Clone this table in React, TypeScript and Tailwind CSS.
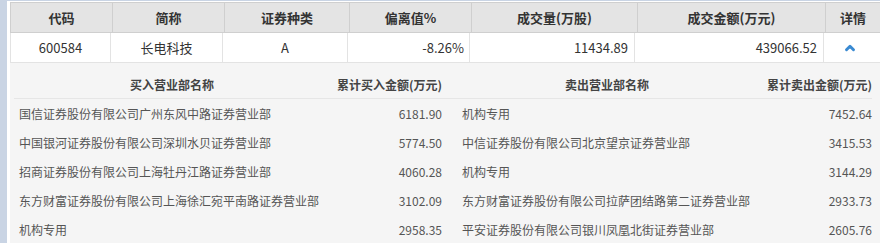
import { ChevronUp } from 'lucide-react';

const font = { fontFamily: '"Microsoft YaHei", "Noto Sans CJK SC", "Liberation Sans", sans-serif' };

const buys = [
  ['国信证券股份有限公司广州东风中路证券营业部', '6181.90'],
  ['中国银河证券股份有限公司深圳水贝证券营业部', '5774.50'],
  ['招商证券股份有限公司上海牡丹江路证券营业部', '4060.28'],
  ['东方财富证券股份有限公司上海徐汇宛平南路证券营业部', '3102.09'],
  ['机构专用', '2958.35'],
];

const sells = [
  ['机构专用', '7452.64'],
  ['中信证券股份有限公司北京望京证券营业部', '3415.53'],
  ['机构专用', '3144.29'],
  ['东方财富证券股份有限公司拉萨团结路第二证券营业部', '2933.73'],
  ['平安证券股份有限公司银川凤凰北街证券营业部', '2605.76'],
];

const headers = ['代码', '简称', '证券种类', '偏离值%', '成交量(万股)', '成交金额(万元)', '详情'];

export default function App() {
  return (
    <div className="w-[880px] h-[243px] overflow-hidden bg-[#c9d4e4] pl-[7px] pt-[1px]" style={font}>
      <div className="h-full bg-white pl-[3px] pt-[1px]">
        {/* main header */}
        <div className="grid grid-cols-[102px_112px_125px_122px_166px_188px_1fr] h-[31px] bg-[#e4e4e4] border-t border-l border-[#cfcfcf] border-b text-[13px] font-bold text-[#333]">
          {headers.map((h, i) => (
            <div
              key={h}
              className={`flex items-center justify-center ${i < headers.length - 1 ? 'border-r border-[#cfcfcf]' : ''}`}
            >
              {h}
            </div>
          ))}
        </div>

        {/* data row */}
        <div className="grid grid-cols-[100px_112px_125px_122px_165px_189px_1fr] h-[30px] border-b border-l border-[#e3e3e3] text-[13px] text-[#333]">
          <div className="flex items-center justify-center border-r border-[#e3e3e3]">600584</div>
          <div className="flex items-center justify-center border-r border-[#e3e3e3]">长电科技</div>
          <div className="flex items-center justify-center border-r border-[#e3e3e3]">A</div>
          <div className="flex items-center justify-end pr-[5px] border-r border-[#e3e3e3]">-8.26%</div>
          <div className="flex items-center justify-end pr-[6px] border-r border-[#e3e3e3]">11434.89</div>
          <div className="flex items-center justify-end pr-[6px] border-r border-[#e3e3e3]">439066.52</div>
          <div className="flex items-center justify-center pr-[4px]">
            <ChevronUp className="w-[14px] h-[14px] text-[#3a8ad2]" strokeWidth={5} />
          </div>
        </div>

        {/* expanded detail */}
        <div className="h-full w-[870px] bg-[#f5f5f5] pl-[4px] pr-[8px] text-[12px]">
          <div className="grid grid-cols-[316px_116px_300px_minmax(0,1fr)] h-[36px] pt-[8px] border-b border-[#e6e6e6] font-bold text-[#444] whitespace-nowrap">
            <div className="flex items-center justify-center">买入营业部名称</div>
            <div className="flex items-center justify-end pr-[4px]">累计买入金额(万元)</div>
            <div className="flex items-center justify-center pl-[22px]">卖出营业部名称</div>
            <div className="flex items-center justify-end">累计卖出金额(万元)</div>
          </div>
          {buys.map((b, i) => (
            <div key={i} className="grid grid-cols-[316px_116px_300px_minmax(0,1fr)] h-[29px] pt-[1px] text-[#555] whitespace-nowrap">
              <div className="flex items-center pl-[5px]">{b[0]}</div>
              <div className="flex items-center justify-end pr-[4px]">{b[1]}</div>
              <div className="flex items-center pl-[16px]">{sells[i][0]}</div>
              <div className="flex items-center justify-end">{sells[i][1]}</div>
            </div>
          ))}
        </div>
      </div>
    </div>
  );
}
